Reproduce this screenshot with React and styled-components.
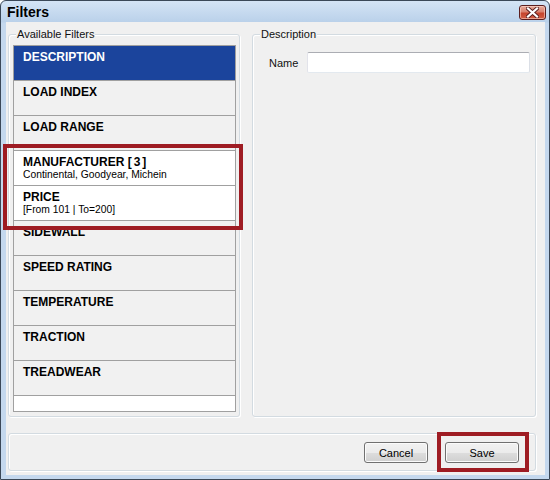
import React from 'react';
import styled, { createGlobalStyle } from 'styled-components';

const Global = createGlobalStyle`
  html, body { margin: 0; padding: 0; background: #ffffff; }
  body { font-family: "Liberation Sans", Arial, sans-serif; }
  * { box-sizing: border-box; }
`;

const Window = styled.div`
  position: relative;
  width: 550px;
  height: 480px;
  border: 1px solid #3b4858;
  border-radius: 6px 6px 0 0;
  background: linear-gradient(#d4e4f5 0px, #bad1ea 21px, #c4d8ee 22px, #c4d8ee 100%);
  padding: 0 4px 4px 5px;
  display: flex;
  flex-direction: column;
  overflow: hidden;
`;

const TitleBar = styled.div`
  height: 21px;
  display: flex;
  justify-content: space-between;
  align-items: flex-start;
  padding: 3px 0 0 1px;
`;

const Title = styled.div`
  font-size: 14px;
  line-height: 16px;
  font-weight: bold;
  color: #000;
`;

const CloseButton = styled.div`
  width: 27px;
  height: 15px;
  margin-top: 1px;
  margin-right: -1px;
  border: 1px solid #5c1e1e;
  border-radius: 3px;
  background: linear-gradient(#e8a99a 0%, #d9826f 45%, #c5442d 55%, #d25d43 100%);
  box-shadow: inset 0 0 0 1px rgba(255, 220, 210, 0.55);
  display: flex;
  align-items: center;
  justify-content: center;
`;

const Client = styled.div`
  flex: 1;
  background: #f0f0f0;
  padding: 12px 9px 4px 2px;
  display: flex;
  flex-direction: column;
`;

const TopRow = styled.div`
  display: flex;
  gap: 12px;
  height: 383px;
`;

const Group = styled.div`
  position: relative;
  width: ${(p) => p.$w}px;
  height: ${(p) => p.$h}px;
  border: 1px solid #d3dbe1;
  border-radius: 3px;
  box-shadow: inset 1px 1px 0 #ffffff, 1px 1px 0 #ffffff;
  padding: ${(p) => p.$pad};
  display: flex;
  flex-direction: column;
`;

const Legend = styled.span`
  position: absolute;
  top: -7px;
  left: 7px;
  padding: 0 1px;
  background: #f0f0f0;
  font-size: 11px;
  line-height: 13px;
  color: #111;
`;

const ListBox = styled.div`
  flex: 1;
  border: 1px solid #a0a0a0;
  background: #ffffff;
  display: flex;
  flex-direction: column;
`;

const Item = styled.div`
  height: 35px;
  flex: none;
  border-bottom: 1px solid #a0a0a0;
  padding: 4px 0 0 9px;
  background: ${(p) => (p.$selected ? '#1b449c' : p.$white ? '#ffffff' : '#f1f1f1')};
  color: ${(p) => (p.$selected ? '#ffffff' : '#000000')};
`;

const ItemTitle = styled.div`
  font-size: 12px;
  line-height: 14px;
  font-weight: bold;
  white-space: nowrap;
`;

const Count = styled.span`
  letter-spacing: 2px;
`;

const ItemSub = styled.div`
  font-size: 10.3px;
  line-height: 12px;
  white-space: nowrap;
`;

const FieldRow = styled.div`
  display: flex;
  align-items: center;
`;

const Label = styled.label`
  width: 38px;
  font-size: 11px;
  color: #111;
`;

const TextBox = styled.input`
  flex: 1;
  height: 21px;
  border: 1px solid;
  border-color: #abadb3 #dbdfe6 #e3e9ef #e2e3ea;
  border-radius: 2px;
  background: #ffffff;
  font: 11px "Liberation Sans", Arial, sans-serif;
  outline: none;
`;

const ButtonBar = styled.div`
  margin-top: 16px;
  width: 528px;
  height: 38px;
  border: 1px solid #d3dbe1;
  border-radius: 3px;
  box-shadow: inset 1px 1px 0 #ffffff, 1px 1px 0 #ffffff;
  display: flex;
  justify-content: flex-end;
  align-items: flex-start;
  gap: 17px;
  padding: 8px 16px 0 0;
`;

const Button = styled.button`
  width: ${(p) => p.$w}px;
  height: 21px;
  padding: 0;
  border: 1px solid #707070;
  border-radius: 3px;
  background: linear-gradient(#f2f2f2 0%, #ebebeb 50%, #dddddd 51%, #cfcfcf 100%);
  box-shadow: inset 0 0 0 1px #fbfbfb;
  font: 11px "Liberation Sans", Arial, sans-serif;
  color: #000;
`;

const Highlight = styled.div`
  position: absolute;
  left: ${(p) => p.$x}px;
  top: ${(p) => p.$y}px;
  width: ${(p) => p.$w}px;
  height: ${(p) => p.$h}px;
  border: 4px solid #9e1c23;
  pointer-events: none;
`;

const filters = [
  { title: 'DESCRIPTION', selected: true },
  { title: 'LOAD INDEX' },
  { title: 'LOAD RANGE' },
  { title: 'MANUFACTURER', count: '[3]', sub: 'Continental, Goodyear, Michein', white: true },
  { title: 'PRICE', sub: '[From 101 | To=200]', white: true },
  { title: 'SIDEWALL' },
  { title: 'SPEED RATING' },
  { title: 'TEMPERATURE' },
  { title: 'TRACTION' },
  { title: 'TREADWEAR' },
];

const CloseIcon = () => (
  <svg width="13" height="11" viewBox="0 0 13 11">
    <path d="M2 1.5 L11 9.5 M11 1.5 L2 9.5" stroke="#5a2020" strokeWidth="4" strokeLinecap="square" />
    <path d="M2 1.5 L11 9.5 M11 1.5 L2 9.5" stroke="#ffffff" strokeWidth="2.2" strokeLinecap="square" />
  </svg>
);

export default function App() {
  return (
    <>
      <Global />
      <Window>
        <TitleBar>
          <Title>Filters</Title>
          <CloseButton>
            <CloseIcon />
          </CloseButton>
        </TitleBar>
        <Client>
          <TopRow>
            <Group $w={232} $h={383} $pad="10px 3px 4px 4px">
              <Legend>Available Filters</Legend>
              <ListBox>
                {filters.map((f) => (
                  <Item key={f.title} $selected={f.selected} $white={f.white}>
                    <ItemTitle>
                      {f.title}
                      {f.count && (
                        <>
                          {' '}
                          <Count>{f.count}</Count>
                        </>
                      )}
                    </ItemTitle>
                    {f.sub && <ItemSub>{f.sub}</ItemSub>}
                  </Item>
                ))}
              </ListBox>
            </Group>
            <Group $w={284} $h={383} $pad="17px 5px 0 16px">
              <Legend>Description</Legend>
              <FieldRow>
                <Label>Name</Label>
                <TextBox />
              </FieldRow>
            </Group>
          </TopRow>
          <ButtonBar>
            <Button $w={64}>Cancel</Button>
            <Button $w={74}>Save</Button>
          </ButtonBar>
        </Client>
        <Highlight $x={2} $y={143} $w={240} $h={86} />
        <Highlight $x={436} $y={431} $w={92} $h={40} />
      </Window>
    </>
  );
}
